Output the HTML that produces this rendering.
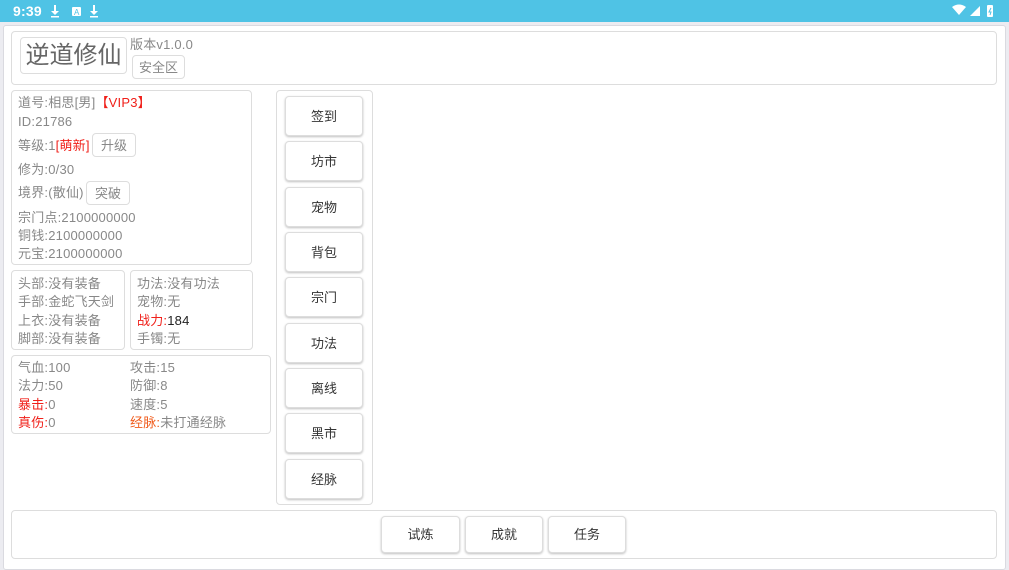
<!DOCTYPE html>
<html><head><meta charset="utf-8"><style>
*{margin:0;padding:0;box-sizing:border-box}
body{width:1009px;height:567px;overflow:hidden;background:#ececf1;font-family:"Liberation Sans","Noto Sans CJK SC",sans-serif;position:relative;font-size:13px;color:#888}
.abs{position:absolute}
.sb{left:0;top:0;width:1009px;height:22px;background:#4fc3e5;color:#fff}
.panel{left:3px;top:25px;width:1003px;height:545px;background:#fff;border:1px solid #dadae0;border-radius:3px}
.box{position:absolute;border:1px solid #ddd;border-radius:4px;background:#fff}
.btn{position:absolute;border:1px solid #ddd;border-radius:4px;background:#fff;text-align:center;color:#555}
.sbtn{box-shadow:0 1px 2px rgba(0,0,0,.25);color:#333;font-size:13px}
.t{position:absolute;white-space:nowrap;line-height:16px;letter-spacing:0.2px}
.red{color:#f0201a}.or{color:#f05a1a}.dk{color:#222}
</style></head><body>
<div class="abs sb">
<span class="t" style="left:13px;top:3px;font-size:14px;font-weight:bold;color:#fff">9:39</span>
<svg class="abs" style="left:50px;top:5px" width="60" height="14"><g fill="#fff"><rect x="4" y="0" width="2" height="7"/><path d="M1 6h8l-4 4z"/><rect x="1" y="11" width="8" height="1.5"/><rect x="22" y="2" width="9" height="9" rx="1"/><rect x="43" y="0" width="2" height="7"/><path d="M40 6h8l-4 4z"/><rect x="40" y="11" width="8" height="1.5"/></g><text x="24" y="10" font-size="8" fill="#4fc3e5" font-family="Liberation Sans">A</text></svg>
<svg class="abs" style="left:952px;top:4px" width="50" height="14"><g fill="#fff"><path d="M0 3Q7 -2 14 3L7 11z"/><path d="M18 12L28 2V12z"/><rect x="35" y="1" width="6" height="12" rx="1"/></g><path d="M39 4l-2 4h2l-1 3" stroke="#4fc3e5" stroke-width="1" fill="none"/></svg>
</div>
<div class="abs panel"></div>
<div class="box" style="left:11px;top:31px;width:986px;height:54px"></div>
<div class="btn" style="left:20px;top:37px;width:107px;height:37px;font-size:24px;line-height:36px;color:#666">逆道修仙</div>
<span class="t" style="left:130px;top:37px">版本v1.0.0</span>
<div class="btn" style="left:132px;top:55px;width:53px;height:24px;line-height:23px;color:#888">安全区</div>

<div class="box" style="left:11px;top:90px;width:241px;height:175px"></div>
<span class="t" style="left:18px;top:95px">道号:相思[男]<span class="red">【VIP3】</span></span>
<span class="t" style="left:18px;top:114px">ID:21786</span>
<span class="t" style="left:18px;top:138px">等级:1<span class="red">[萌新]</span></span>
<div class="btn" style="left:92px;top:133px;width:44px;height:24px;line-height:23px;color:#888">升级</div>
<span class="t" style="left:18px;top:162px">修为:0/30</span>
<span class="t" style="left:18px;top:185px">境界:(散仙)</span>
<div class="btn" style="left:86px;top:181px;width:44px;height:24px;line-height:23px;color:#888">突破</div>
<span class="t" style="left:18px;top:210px">宗门点:2100000000</span>
<span class="t" style="left:18px;top:228px">铜钱:2100000000</span>
<span class="t" style="left:18px;top:246px">元宝:2100000000</span>

<div class="box" style="left:11px;top:270px;width:114px;height:80px"></div>
<span class="t" style="left:18px;top:276px">头部:没有装备</span>
<span class="t" style="left:18px;top:294px">手部:金蛇飞天剑</span>
<span class="t" style="left:18px;top:313px">上衣:没有装备</span>
<span class="t" style="left:18px;top:331px">脚部:没有装备</span>
<div class="box" style="left:130px;top:270px;width:123px;height:80px"></div>
<span class="t" style="left:137px;top:276px">功法:没有功法</span>
<span class="t" style="left:137px;top:294px">宠物:无</span>
<span class="t" style="left:137px;top:313px"><span class="red">战力:</span><span class="dk">184</span></span>
<span class="t" style="left:137px;top:331px">手镯:无</span>

<div class="box" style="left:11px;top:355px;width:260px;height:79px"></div>
<span class="t" style="left:18px;top:360px">气血:100</span>
<span class="t" style="left:18px;top:378px">法力:50</span>
<span class="t" style="left:18px;top:397px"><span class="red">暴击:</span>0</span>
<span class="t" style="left:18px;top:415px"><span class="red">真伤:</span>0</span>
<span class="t" style="left:130px;top:360px">攻击:15</span>
<span class="t" style="left:130px;top:378px">防御:8</span>
<span class="t" style="left:130px;top:397px">速度:5</span>
<span class="t" style="left:130px;top:415px"><span class="or">经脉:</span>未打通经脉</span>

<div class="box" style="left:276px;top:90px;width:97px;height:415px"></div>
<div class="btn sbtn" style="left:285px;top:96px;width:78px;height:40px;line-height:39px">签到</div>
<div class="btn sbtn" style="left:285px;top:141px;width:78px;height:40px;line-height:39px">坊市</div>
<div class="btn sbtn" style="left:285px;top:187px;width:78px;height:40px;line-height:39px">宠物</div>
<div class="btn sbtn" style="left:285px;top:232px;width:78px;height:40px;line-height:39px">背包</div>
<div class="btn sbtn" style="left:285px;top:277px;width:78px;height:40px;line-height:39px">宗门</div>
<div class="btn sbtn" style="left:285px;top:323px;width:78px;height:40px;line-height:39px">功法</div>
<div class="btn sbtn" style="left:285px;top:368px;width:78px;height:40px;line-height:39px">离线</div>
<div class="btn sbtn" style="left:285px;top:413px;width:78px;height:40px;line-height:39px">黑市</div>
<div class="btn sbtn" style="left:285px;top:459px;width:78px;height:40px;line-height:39px">经脉</div>

<div class="box" style="left:11px;top:510px;width:986px;height:49px"></div>
<div class="btn sbtn" style="left:381px;top:516px;width:79px;height:37px;line-height:36px">试炼</div>
<div class="btn sbtn" style="left:465px;top:516px;width:78px;height:37px;line-height:36px">成就</div>
<div class="btn sbtn" style="left:548px;top:516px;width:78px;height:37px;line-height:36px">任务</div>
</body></html>
